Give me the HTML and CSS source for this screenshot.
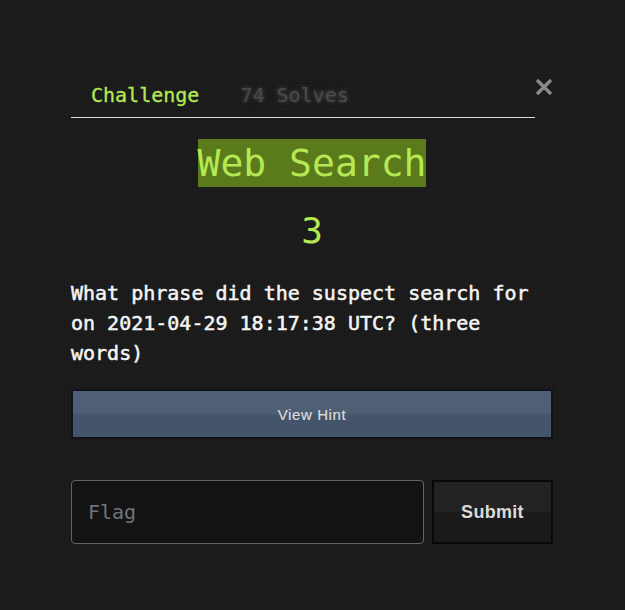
FILE: index.html
```html
<!DOCTYPE html>
<html>
<head>
<meta charset="utf-8">
<link rel="stylesheet" href="styles.css">
</head>
<body>
<div class="modal">
  <div class="header">
    <nav class="tabs">
      <span class="tab active">Challenge</span>
      <span class="tab solves">74 Solves</span>
    </nav>
    <button class="close" aria-label="Close">
      <svg width="18" height="18" viewBox="0 0 18 18"><path d="M2 2 L16 16 M16 2 L2 16" stroke="#8a8a8a" stroke-width="3.4" stroke-linecap="butt"/></svg>
    </button>
  </div>
  <div class="title-wrap"><h2 class="title">Web Search</h2></div>
  <div class="value">3</div>
  <p class="question">What phrase did the suspect search for on 2021-04-29 18:17:38 UTC? (three words)</p>
  <button class="hint">View Hint</button>
  <div class="submit-row">
    <input class="flag" type="text" placeholder="Flag">
    <button class="submit">Submit</button>
  </div>
</div>
</body>
</html>
```
FILE: styles.css
```css
html, body {
  margin: 0;
  padding: 0;
}
body {
  width: 625px;
  height: 610px;
  background-color: #1b1b1b;
  background-image:
    repeating-linear-gradient(0deg, rgba(255,255,255,0.012) 0 1px, transparent 1px 4px),
    repeating-linear-gradient(90deg, rgba(0,0,0,0.08) 0 1px, transparent 1px 4px);
  font-family: "DejaVu Sans Mono", monospace;
  overflow: hidden;
}
.modal {
  width: 482px;
  margin-left: 71px;
  padding-top: 73px;
  display: flex;
  flex-direction: column;
}
.header {
  display: flex;
  align-items: flex-start;
}
.tabs {
  width: 464px;
  height: 45px;
  border-bottom: 1px solid #dcdcdc;
  display: flex;
  gap: 41px;
  padding-left: 20px;
  box-sizing: border-box;
  align-items: center;
}
.tab {
  font-size: 20px;
  line-height: 44px;
  color: #555;
  -webkit-text-stroke: 0.3px currentColor;
}
.tab.active {
  color: #b5e853;
}
.tab.solves {
  color: #4a4a4a;
  -webkit-text-stroke: 0;
  text-shadow: 0 0 4px rgba(140,140,140,0.5);
}
.close {
  width: 18px;
  height: 18px;
  padding: 0;
  margin: 5px 0 0 0;
  border: 0;
  background: transparent;
  display: flex;
}
.title-wrap {
  text-align: center;
  margin-top: 21px;
}
.title {
  display: inline-block;
  margin: 0;
  font-size: 38px;
  font-weight: normal;
  line-height: 48px;
  height: 48px;
  color: #b5e853;
  background: #5a7a1c;
}
.value {
  text-align: center;
  color: #b5e853;
  font-size: 36px;
  line-height: 48px;
  margin-top: 20px;
}
.question {
  margin: 23px 0 0 0;
  color: #f4f4f4;
  font-size: 20px;
  font-weight: normal;
  -webkit-text-stroke: 0.5px #f4f4f4;
  line-height: 30px;
}
.hint {
  margin-top: 21px;
  height: 50px;
  width: 482px;
  border: 2px solid #10141a;
  background: linear-gradient(#4f5f76 0 46%, #44546a 54% 100%);
  color: #dcdcdc;
  font-family: "Liberation Sans", Arial, sans-serif;
  font-size: 15px;
  letter-spacing: 0.6px;
  -webkit-text-stroke: 0.2px #dcdcdc;
  padding-top: 2px;
  cursor: pointer;
}
.submit-row {
  display: flex;
  gap: 8px;
  margin-top: 41px;
  height: 64px;
}
.flag {
  width: 353px;
  height: 64px;
  box-sizing: border-box;
  border: 1px solid #646464;
  border-radius: 4px;
  background: #131313;
  padding: 0 16px;
  font-family: "DejaVu Sans Mono", monospace;
  font-size: 20px;
  color: #ddd;
  outline: none;
}
.flag::placeholder {
  color: #6f757c;
}
.submit {
  width: 121px;
  height: 64px;
  box-sizing: border-box;
  border: 2px solid #080808;
  background: linear-gradient(#222 0 48%, #1a1a1a 52% 100%);
  color: #dadada;
  font-family: "Liberation Sans", Arial, sans-serif;
  font-weight: bold;
  font-size: 18px;
  letter-spacing: 0.3px;
  cursor: pointer;
}
```
